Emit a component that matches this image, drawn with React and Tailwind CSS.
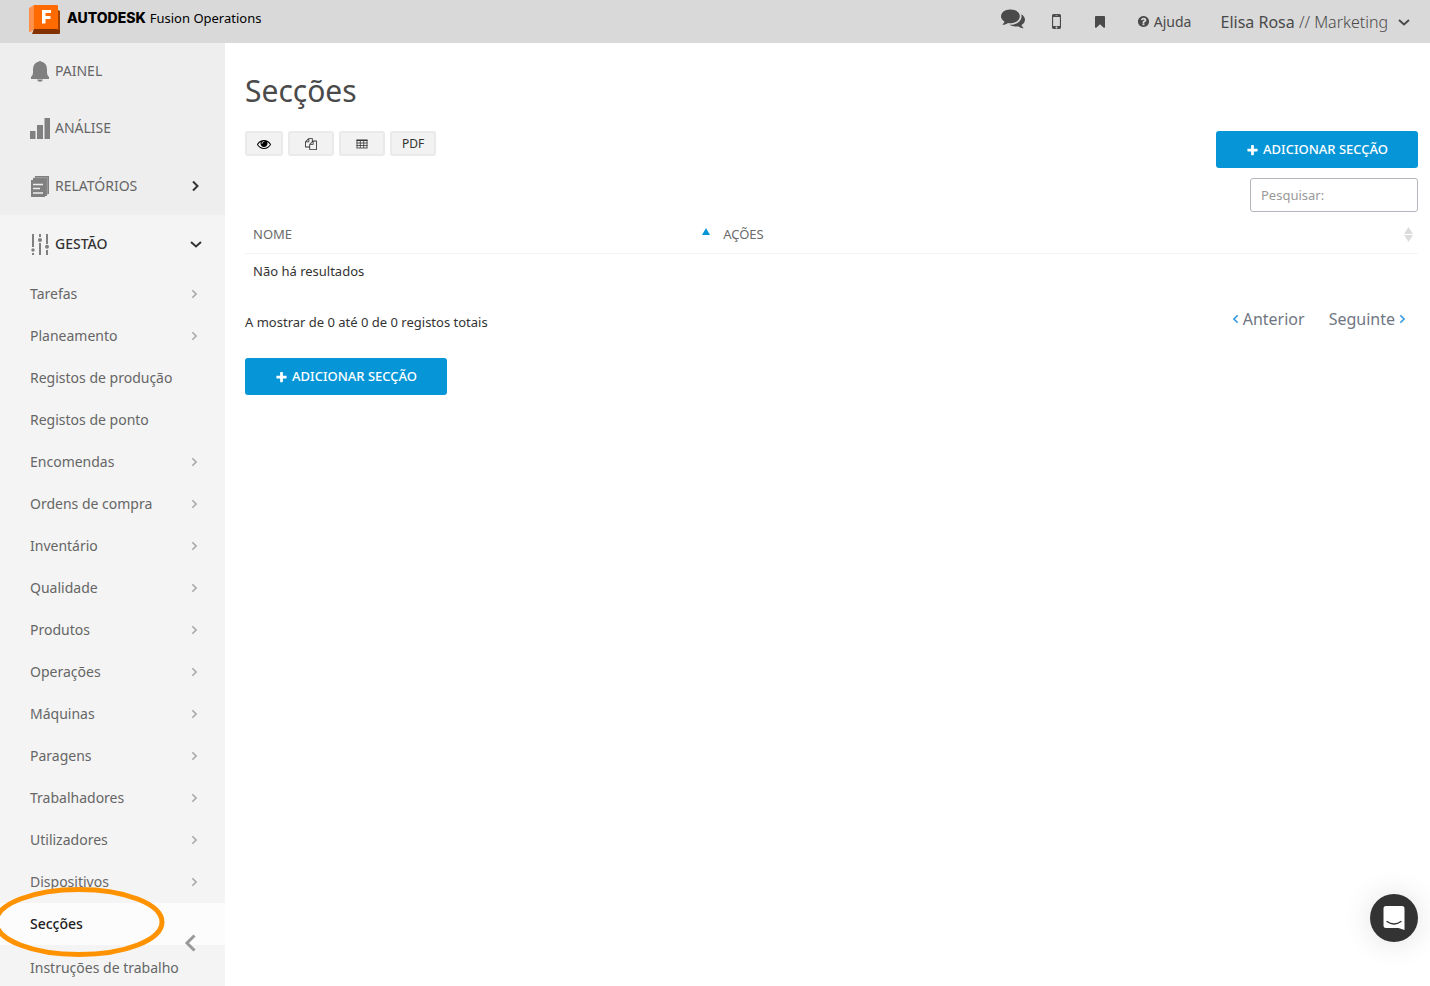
import React from "react";

const PATHS = {
  comments:
    "M1408 768q0 139-94 257t-256.5 186.5-353.5 68.5q-86 0-176-16-124 88-278 128-36 9-86 16h-3q-11 0-20.5-8t-11.5-21q-1-3-1-6.5t.5-6.5 2-6l2.5-5 3.5-5.5 4-5 4.5-5 4-4.5q5-6 23-25t26-29.5 22.5-29 25-38.5 20.5-44q-124-72-195-177t-71-224q0-139 94-257t256.5-186.5 353.5-68.5 353.5 68.5 256.5 186.5 94 257zm384 256q0 120-71 224.5t-195 176.5q10 24 20.5 44t25 38.5 22.5 29 26 29.5 23 25q1 1 4 4.5t4.5 5 4 5 3.5 5.5l2.5 5 2 6 .5 6.5-1 6.5q-3 14-13 22t-22 7q-50-7-86-16-154-40-278-128-90 16-176 16-271 0-472-132 58 4 88 4 161 0 309-45t264-129q125-92 192-212t67-254q0-77-23-152 129 71 204 178t75 230z",
  mobile:
    "M976 1408q0-33-23.5-56.5t-56.5-23.5-56.5 23.5-23.5 56.5 23.5 56.5 56.5 23.5 56.5-23.5 23.5-56.5zm208-160v-704q0-13-9.5-22.5t-22.5-9.5h-512q-13 0-22.5 9.5t-9.5 22.5v704q0 13 9.5 22.5t22.5 9.5h512q13 0 22.5-9.5t9.5-22.5zm-192-848q0-16-16-16h-160q-16 0-16 16t16 16h160q16 0 16-16zm288-16v1024q0 52-38 90t-90 38h-512q-52 0-90-38t-38-90v-1024q0-52 38-90t90-38h512q52 0 90 38t38 90z",
  bookmark:
    "M1420 128q23 0 44 9 33 13 52.5 41t19.5 62v1289q0 34-19.5 62t-52.5 41q-19 8-44 8-48 0-83-32l-441-424-441 424q-36 33-83 33-23 0-44-9-33-13-52.5-41t-19.5-62v-1289q0-34 19.5-62t52.5-41q21-9 44-9h1048z",
  question:
    "M1024 1376v-192q0-14-9-23t-23-9h-192q-14 0-23 9t-9 23v192q0 14 9 23t23 9h192q14 0 23-9t9-23zm256-672q0-88-55.5-163t-138.5-116-170-41q-243 0-371 213-15 24 8 42l132 100q7 6 19 6 16 0 25-12 53-68 86-92 34-24 86-24 48 0 85.5 26t37.5 59q0 38-20 61t-68 45q-63 28-115.500 86.500t-52.500 125.500v36q0 14 9 23t23 9h192q14 0 23-9t9-23q0-19 21.500-49.500t54.500-49.500q32-18 49-28.500t46-35 44.500-48 28-60.500 12.500-81zm384 192q0 209-103 385.500t-279.500 279.500-385.500 103-385.500-103-279.500-279.500-103-385.500 103-385.500 279.500-279.500 385.500-103 385.500 103 279.500 279.500 103 385.500z",
  plus:
    "M1600 736v192q0 40-28 68t-68 28h-416v416q0 40-28 68t-68 28h-192q-40 0-68-28t-28-68v-416h-416q-40 0-68-28t-28-68v-192q0-40 28-68t68-28h416v-416q0-40 28-68t68-28h192q40 0 68 28t28 68v416h416q40 0 68 28t28 68z",
  eye:
    "M1664 960q-152-236-381-353 61 104 61 225 0 185-131.5 316.5t-316.5 131.5-316.5-131.5-131.5-316.5q0-121 61-225-229 117-381 353 133 205 333.5 326.5t434.5 121.5 434.5-121.5 333.5-326.5zm-720-384q0-20-14-34t-34-14q-125 0-214.5 89.5t-89.5 214.5q0 20 14 34t34 14 34-14 14-34q0-86 61-147t147-61q20 0 34-14t14-34zm848 384q0 34-20 69-140 230-376.5 368.5t-499.5 138.5-499.5-139-376.5-368q-20-35-20-69t20-69q140-229 376.5-368t499.5-139 499.5 139 376.5 368q20 35 20 69z",
  copy:
    "M1696 384q40 0 68 28t28 68v1216q0 40-28 68t-68 28h-960q-40 0-68-28t-28-68v-288h-544q-40 0-68-28t-28-68v-672q0-40 20-88t48-76l408-408q28-28 76-48t88-20h416q40 0 68 28t28 68v328q68-40 128-40h416zm-544 213l-299 299h299v-299zm-640-384l-299 299h299v-299zm196 647l316-316v-416h-384v416q0 40-28 68t-68 28h-416v640h512v-256q0-40 20-88t48-76zm956 804v-1152h-384v416q0 40-28 68t-68 28h-416v640h896z",
};

function Glyph({ name, className }) {
  return (
    <svg viewBox="0 0 1792 1792" className={className} fill="currentColor" aria-hidden="true">
      <path d={PATHS[name]} />
    </svg>
  );
}

function Angle({ d, className }) {
  return (
    <svg viewBox="0 0 12 12" className={className} fill="none" stroke="currentColor" aria-hidden="true">
      <path d={d} />
    </svg>
  );
}

const RIGHT = "M4 1.500L8.500 6L4 10.500";
const LEFT = "M8 1.500L3.500 6L8 10.500";
const DOWN = "M1 4L6 8.500L11 4";

function Logo() {
  return (
    <svg viewBox="0 0 32 30" className="h-[30px] w-8 shrink-0" aria-hidden="true">
      <path d="M0 3L5 0V25L0 27.500Z" fill="#ff914d" />
      <path d="M5 24H29L31 5.500V28Q31 29 30 29H3Z" fill="#843100" />
      <path d="M29 5L31 6V25L28 25Z" fill="#a04100" />
      <path d="M5 0H28Q29 0 29 1V24H5Z" fill="#ff6b00" />
      <path d="M13 5H22V8H16.500V11H21.500V14H16.500V18.500H13Z" fill="#fff" />
    </svg>
  );
}

const ICON = "h-[22px] w-5 shrink-0";

function Bell() {
  return (
    <svg viewBox="0 0 20 22" className={ICON} fill="#808080" aria-hidden="true">
      <path d="M9 1.500Q10 0 11 1.500Q17 3 17 9V13Q17 15.500 19 17V19H1V17Q3 15.500 3 13V9Q3 3 9 1.500Z" />
      <path d="M7 19.500H13Q12.500 21.700 10 21.700Q7.500 21.700 7 19.500Z" />
    </svg>
  );
}

function Bars() {
  return (
    <svg viewBox="0 0 20 22" className={ICON} fill="#808080" aria-hidden="true">
      <path d="M0 14H5.500V22H0ZM7 8H13V22H7ZM14.500 1H20V22H14.500Z" />
    </svg>
  );
}

function Report() {
  return (
    <svg viewBox="0 0 20 22" className={ICON} fill="none" aria-hidden="true">
      <path d="M5 1H19V19H17V3H5ZM3 3H17V21H15V5H3Z" fill="#808080" />
      <path d="M3.500 2.700H17.300V20" stroke="#b5b5b5" strokeWidth="0.6" />
      <path d="M1 5H15V22H1Z" fill="#808080" />
      <path d="M3 9.500H13M3 13.500H10M3 18H13" stroke="#eee" strokeWidth="1.500" />
    </svg>
  );
}

function Sliders() {
  return (
    <svg viewBox="0 0 20 22" className={ICON} fill="#808080" stroke="#808080" aria-hidden="true">
      <path d="M3 1V14M3 20V22M10 1V4M10 10V22M17 1V11M17 17V22" strokeWidth="2" />
      <circle cx="3" cy="17" r="1.700" stroke="none" />
      <circle cx="10" cy="7" r="2" stroke="none" />
      <circle cx="17" cy="13.800" r="2" stroke="none" />
    </svg>
  );
}

const SECTIONS = [
  ["PAINEL", Bell, false, "h-14"],
  ["ANÁLISE", Bars, false, "h-[58px]"],
  ["RELATÓRIOS", Report, true, "h-[58px]"],
];

const ITEMS = [
  ["Tarefas", true],
  ["Planeamento", true],
  ["Registos de produção", false],
  ["Registos de ponto", false],
  ["Encomendas", true],
  ["Ordens de compra", true],
  ["Inventário", true],
  ["Qualidade", true],
  ["Produtos", true],
  ["Operações", true],
  ["Máquinas", true],
  ["Paragens", true],
  ["Trabalhadores", true],
  ["Utilizadores", true],
  ["Dispositivos", true],
];

function Sidebar() {
  return (
    <nav className="relative w-[225px] shrink-0 bg-[#f4f4f4] text-[#666]">
      <div className="bg-[#eee]">
        {SECTIONS.map(([label, Icon, arrow, height]) => (
          <a key={label} href="#" className={`flex items-center pl-[30px] pr-6 text-sm ${height}`}>
            <Icon />
            <span className="ml-[5px] flex-1 pb-px">{label}</span>
            {arrow && <Angle d={RIGHT} className="h-3 w-3 stroke-2 text-[#333]" />}
          </a>
        ))}
      </div>
      <a href="#" className="flex h-[58px] items-center pl-[30px] pr-[23px] text-sm font-medium text-[#333]">
        <Sliders />
        <span className="ml-[5px] flex-1">GESTÃO</span>
        <Angle d={DOWN} className="h-3 w-3 stroke-2" />
      </a>
      {ITEMS.map(([label, arrow]) => (
        <a key={label} href="#" className="flex h-[42px] items-center justify-between pl-[30px] pr-[26px] text-sm">
          {label}
          {arrow && <Angle d={RIGHT} className="h-[10px] w-[10px] stroke-2 text-[#aaa]" />}
        </a>
      ))}
      <a href="#" className="flex h-[42px] items-center bg-[#fcfcfc] pl-[30px] text-sm font-medium text-[#222]">
        Secções
      </a>
      <a href="#" className="flex h-10 items-center pl-[30px] pt-[6px] text-sm">
        Instruções de trabalho
      </a>
      <svg
        viewBox="0 0 166 72"
        className="pointer-events-none absolute bottom-7 left-0 h-[72px] w-[166px]"
        fill="none"
        aria-hidden="true"
      >
        <ellipse cx="79" cy="36" rx="83" ry="32.500" stroke="#ff9200" strokeWidth="5" />
      </svg>
      <button aria-label="Recolher menu" className="absolute bottom-[34px] left-[184px] text-[#999]">
        <svg viewBox="0 0 12 18" className="h-[18px] w-3" fill="none" stroke="currentColor" strokeWidth="3" aria-hidden="true">
          <path d="M10.500 1.500L3 9L10.500 16.500" />
        </svg>
      </button>
    </nav>
  );
}

function Header() {
  return (
    <header className="flex h-[43px] items-center justify-between bg-[#d9d9d9] pl-[29px] pr-5 text-[#4a4a4a]">
      <a href="#" className="flex items-center gap-[6px] pb-1 text-black">
        <Logo />
        <span className="flex items-center gap-1 pb-1 leading-5">
          <span className="font-['Inter','Liberation_Sans',sans-serif] text-sm font-extrabold">AUTODESK</span>
          <span className="text-[13px]">Fusion Operations</span>
        </span>
      </a>
      <div className="flex items-center">
        <button aria-label="Mensagens" className="mr-[21px] pb-2">
          <Glyph name="comments" className="h-6 w-6" />
        </button>
        <button aria-label="Telemóvel" className="mr-[26px]">
          <Glyph name="mobile" className="h-[21px] w-[21px]" />
        </button>
        <button aria-label="Marcador" className="mr-[30px]">
          <Glyph name="bookmark" className="h-[14px] w-[14px]" />
        </button>
        <a href="#" className="mr-[29px] flex items-center gap-1 text-sm">
          <Glyph name="question" className="h-[13px] w-[13px]" />
          Ajuda
        </a>
        <button className="flex items-center gap-[10px] text-base">
          <span>
            Elisa Rosa <span className="font-light">// Marketing</span>
          </span>
          <Angle d={DOWN} className="h-3 w-3 stroke-2" />
        </button>
      </div>
    </header>
  );
}

function AddButton() {
  return (
    <button className="flex h-[37px] w-[202px] items-center justify-center gap-1 rounded-[3px] bg-[#0696d7] pt-px text-[13px] font-medium text-white">
      <Glyph name="plus" className="h-[13px] w-[13px]" />
      ADICIONAR SECÇÃO
    </button>
  );
}

const TOOL = "flex h-[25px] items-center justify-center rounded-[3px] border-2 border-[#eaeaea] bg-[#f2f2f2] text-[#333]";

function Content() {
  return (
    <main className="flex-1 pl-5 pr-3 pt-7">
      <h1 className="text-[30px] leading-10 text-[#4a4a4a]">Secções</h1>
      <div className="mt-5 flex items-start justify-between">
        <div className="flex gap-[5px]">
          <button aria-label="Colunas" className={`${TOOL} w-[38px]`}>
            <Glyph name="eye" className="h-[14px] w-[14px] text-black" />
          </button>
          <button aria-label="Copiar" className={`${TOOL} w-[46px]`}>
            <Glyph name="copy" className="h-3 w-3" />
          </button>
          <button aria-label="Tabela" className={`${TOOL} w-[46px]`}>
            <svg viewBox="0 0 12 10" className="h-[10px] w-3" fill="none" stroke="currentColor" aria-hidden="true">
              <path d="M0.500 1.500H11.500M0.500 4H11.500M0.500 6.500H11.500M0.500 9H11.500M1 1V9M4.300 1V9M7.700 1V9M11 1V9" strokeWidth="0.8" />
              <path d="M0.500 1.200H11.500" strokeWidth="1.400" />
            </svg>
          </button>
          <button className={`${TOOL} w-[46px] text-xs`}>PDF</button>
        </div>
        <div className="flex flex-col items-end gap-[10px]">
          <AddButton />
          <input
            type="search"
            aria-label="Pesquisar"
            placeholder="Pesquisar:"
            className="h-[34px] w-[168px] rounded-[3px] border border-[#b5b5bd] bg-white px-[10px] text-[13px] placeholder:text-[#999]"
          />
        </div>
      </div>
      <table className="mt-1 w-full table-fixed text-left text-[13px]">
        <thead>
          <tr className="h-[37px] border-b border-[#f4f4f4] text-[#6b6b6b]">
            <th className="w-2/5 pl-2 pr-1 font-normal">
              <div className="flex items-center justify-between">
                NOME
                <svg viewBox="0 0 8 7" className="mb-[6px] h-[7px] w-2" aria-hidden="true">
                  <path d="M4 0L8 7H0Z" fill="#0696d7" />
                </svg>
              </div>
            </th>
            <th className="pl-[9px] pr-[5px] font-normal">
              <div className="flex items-center justify-between">
                AÇÕES
                <svg viewBox="0 0 9 15" className="h-[15px] w-[9px]" aria-hidden="true">
                  <path d="M4.500 0L9 7H0ZM0 8H9L4.500 15Z" fill="#dcdcdc" />
                </svg>
              </div>
            </th>
          </tr>
        </thead>
        <tbody>
          <tr className="h-9 text-[#333]">
            <td colSpan={2} className="px-2">Não há resultados</td>
          </tr>
        </tbody>
      </table>
      <div className="mt-[18px] flex h-[27px] items-start justify-between">
        <p className="pt-[6px] text-[13px] text-[#333]">A mostrar de 0 até 0 de 0 registos totais</p>
        <div className="flex gap-6 pr-[11px] text-base text-[#6f7682]">
          <a href="#" className="flex items-center gap-[2px]">
            <Angle d={LEFT} className="h-[10px] w-[10px] stroke-2 text-[#3a9be0]" />
            Anterior
          </a>
          <a href="#" className="flex items-center gap-[2px]">
            Seguinte
            <Angle d={RIGHT} className="h-[10px] w-[10px] stroke-2 text-[#3a9be0]" />
          </a>
        </div>
      </div>
      <div className="mt-6">
        <AddButton />
      </div>
    </main>
  );
}

export default function App() {
  return (
    <div className="flex min-h-screen flex-col bg-white font-['Noto_Sans','Open_Sans',sans-serif]">
      <Header />
      <div className="flex flex-1">
        <Sidebar />
        <Content />
      </div>
      <button
        aria-label="Abrir chat"
        className="fixed bottom-11 right-3 flex h-12 w-12 items-center justify-center rounded-full bg-[#333] shadow-[0_1px_30px_rgba(0,0,0,0.12)]"
      >
        <svg viewBox="0 0 22 24" className="h-6 w-[22px]" fill="none" aria-hidden="true">
          <path d="M3 0H19Q21.500 0 21.500 2.500V24L15.500 22H3Q0.500 22 0.500 19.500V2.500Q0.500 0 3 0Z" fill="#fff" />
          <path d="M4 15.500Q11 20.500 18 15.500" stroke="#333" strokeWidth="1.300" strokeLinecap="round" />
        </svg>
      </button>
    </div>
  );
}
